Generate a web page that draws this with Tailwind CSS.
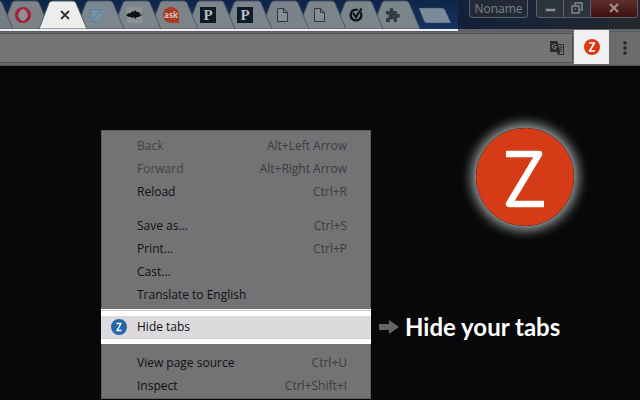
<!DOCTYPE html>
<html lang="en">
<head>
    <meta charset="UTF-8">
    <meta name="viewport" content="width=device-width, initial-scale=1.0">
    <title>Hide your tabs</title>
    <script src="https://cdn.jsdelivr.net/npm/@tailwindcss/browser@4"></script>
</head>
<body class="bg-[#08080a] min-h-screen font-['Open_Sans',sans-serif]">
    <!-- Shared tab outline -->
    <svg class="hidden">
        <symbol id="tab" viewBox="0 0 48 29">
            <path d="M0 29 L10 3 Q11 1 13 1 H34 Q36 1 37 3 L48 29 Z" stroke="#4b5864" stroke-width="1"/>
        </symbol>
    </svg>

    <!-- Window frame with tabs -->
    <header>
        <div class="flex bg-[#1b2531]">
            <nav class="flex flex-1 min-w-0 overflow-hidden border-b-2 border-[#f3f0f4] bg-linear-to-b from-[#0e2548] to-[#17335f]" aria-label="Tabs">
                <button class="relative z-12 w-12 h-[29px] -ml-[35px] -mr-[11px] shrink-0" aria-label="Tab">
                    <svg class="w-12 h-[29px] fill-[#747d84]"><use href="#tab"/></svg>
                </button>
                <button class="relative z-11 w-12 h-[29px] -mr-[11px] shrink-0" aria-label="Opera">
                    <svg class="w-12 h-[29px] fill-[#7c8286]"><use href="#tab"/></svg>
                    <svg class="absolute left-3 top-[6px] w-[18px] h-[18px]" viewBox="0 0 18 18">
                        <ellipse cx="9" cy="9" rx="6.500" ry="6.500" fill="none" stroke="#a91c39" stroke-width="3"/>
                        <ellipse cx="9" cy="9" rx="4" ry="6" fill="#8c8f93"/>
                    </svg>
                </button>
                <button class="relative z-20 w-12 h-[29px] -mr-[11px] shrink-0" aria-label="Close tab">
                    <svg class="w-12 h-[29px] fill-[#ededeb]"><use href="#tab"/></svg>
                    <svg class="absolute left-[21px] top-[10px] w-[10px] h-[10px]" viewBox="0 0 10 10">
                        <path d="M1 1 L9 9 M9 1 L1 9" stroke="#333" stroke-width="1.800"/>
                    </svg>
                </button>
                <button class="relative z-10 w-12 h-[29px] -mr-[11px] shrink-0" aria-label="Notes">
                    <svg class="w-12 h-[29px] fill-[#7c868e]"><use href="#tab"/></svg>
                    <svg class="absolute left-3 top-[7px] w-4 h-4" viewBox="0 0 16 16">
                        <path d="M2 1 H15 L12 14 H2 Z" fill="#7890a4"/>
                        <path d="M2.500 13 V2.500 H14 L2.500 14.500 H9 L12 12" fill="none" stroke="#55809f" stroke-width="1"/>
                    </svg>
                </button>
                <button class="relative z-9 w-12 h-[29px] -mr-[11px] shrink-0" aria-label="Audio">
                    <svg class="w-12 h-[29px] fill-[#7c858b]"><use href="#tab"/></svg>
                    <svg class="absolute left-3 top-[6px] w-[18px] h-[18px]" viewBox="0 0 18 18">
                        <rect x="2" y="1" width="15" height="16" fill="#8d9294"/>
                        <path d="M1 9 L4 7 L6 7 L7 5 L9 6 L10 4 L12 6 L14 6 L15 8 L17 9 L15 10 L14 11 L12 11 L10 13 L9 11 L7 12 L6 11 L4 11 Z" fill="#101214"/>
                    </svg>
                </button>
                <button class="relative z-8 w-12 h-[29px] -mr-[11px] shrink-0" aria-label="Ask">
                    <svg class="w-12 h-[29px] fill-[#7c848a]"><use href="#tab"/></svg>
                    <span class="absolute left-[13px] top-[7px] w-4 h-4 rounded-full rounded-br-none bg-[#a83c22] text-[#d8c8c2] text-[8px] leading-[15px] font-bold text-center">ask</span>
                </button>
                <button class="relative z-7 w-12 h-[29px] -mr-[11px] shrink-0" aria-label="P">
                    <svg class="w-12 h-[29px] fill-[#7b848b]"><use href="#tab"/></svg>
                    <span class="absolute left-[13px] top-[7px] w-4 h-4 bg-[#0d1b28] text-[#b4bcc2] text-[15px] leading-4 font-bold text-center font-['Liberation_Serif',serif]">P</span>
                </button>
                <button class="relative z-6 w-12 h-[29px] -mr-[11px] shrink-0" aria-label="P">
                    <svg class="w-12 h-[29px] fill-[#7b848b]"><use href="#tab"/></svg>
                    <span class="absolute left-[13px] top-[7px] w-4 h-4 bg-[#0d1b28] text-[#b4bcc2] text-[15px] leading-4 font-bold text-center font-['Liberation_Serif',serif]">P</span>
                </button>
                <button class="relative z-5 w-12 h-[29px] -mr-[11px] shrink-0" aria-label="Page">
                    <svg class="w-12 h-[29px] fill-[#7b838a]"><use href="#tab"/></svg>
                    <svg class="absolute left-4 top-2 w-[11px] h-[14px]" viewBox="0 0 11 14">
                        <path d="M0.500 0.500 H6.500 L10.500 4.500 V13.500 H0.500 Z M6.500 0.500 V4.500 H10.500" fill="#858c92" stroke="#30363c"/>
                    </svg>
                </button>
                <button class="relative z-4 w-12 h-[29px] -mr-[11px] shrink-0" aria-label="Page">
                    <svg class="w-12 h-[29px] fill-[#7b858a]"><use href="#tab"/></svg>
                    <svg class="absolute left-4 top-2 w-[11px] h-[14px]" viewBox="0 0 11 14">
                        <path d="M0.500 0.500 H6.500 L10.500 4.500 V13.500 H0.500 Z M6.500 0.500 V4.500 H10.500" fill="#858c92" stroke="#30363c"/>
                    </svg>
                </button>
                <button class="relative z-3 w-12 h-[29px] -mr-[11px] shrink-0" aria-label="Check">
                    <svg class="w-12 h-[29px] fill-[#7b868b]"><use href="#tab"/></svg>
                    <svg class="absolute left-[14px] top-[7px] w-[15px] h-[15px]" viewBox="0 0 15 15">
                        <circle cx="7" cy="8" r="5.400" fill="none" stroke="#101417" stroke-width="2.400"/>
                        <path d="M5 6 L7 9 L12 1.500" fill="none" stroke="#7b868b" stroke-width="3.600"/>
                        <path d="M4 6 L7 10 L12.500 1.500" fill="none" stroke="#101417" stroke-width="2.200"/>
                    </svg>
                </button>
                <button class="relative z-2 w-12 h-[29px] shrink-0" aria-label="Extensions">
                    <svg class="w-12 h-[29px] fill-[#7b868b]"><use href="#tab"/></svg>
                    <svg class="absolute left-[13px] top-2 w-[15px] h-[15px] fill-[#333c42]" viewBox="0 0 15 15">
                        <path d="M1 3 H5 Q3.500 0 6.500 0 Q9.500 0 8 3 H12 V6 Q15 5 15 8 Q15 10.500 12 9.500 V14 H8.500 Q9.500 11 7 11 Q4.500 11 5 14 H1 V10 Q4 10.500 4 8 Q4 6 1 6.500 Z"/>
                    </svg>
                </button>
                <button class="h-[29px] shrink-0 -ml-[2px]" aria-label="New tab">
                    <svg class="w-[34px] h-[29px]" viewBox="0 0 34 29">
                        <path d="M1 8 H24 Q26 8 27 10 L33 23 H9 Q7 23 6 21 Z" fill="#7d8a9a" stroke="#3a5170" stroke-width="0.500"/>
                    </svg>
                </button>
            </nav>
            <div class="flex gap-2 pl-[11px] pr-[2px] border-b-2 border-[#626468] bg-linear-to-r from-[#10213a] to-[#25282d] text-[#7c828a]">
                <button class="w-[59px] h-[18px] border border-t-0 border-[#5b616a] rounded-b-[4px] bg-[#242a35] text-[12px] leading-4">Noname</button>
                <div class="flex h-[18px] border border-t-0 border-[#5b616a] rounded-b-[4px] overflow-hidden bg-[#2c333c]">
                    <button class="w-[27px] border-r border-[#5b616a] flex justify-center pt-2" aria-label="Minimize">
                        <span class="w-[11px] h-1 bg-[#8b9097] border border-[#454b53]"></span>
                    </button>
                    <button class="w-[27px] border-r border-[#5b616a] flex justify-center pt-[2px]" aria-label="Restore">
                        <svg class="w-3 h-3" viewBox="0 0 12 12" fill="none" stroke="#81878e" stroke-width="1.500">
                            <path d="M4 3 V1 H11 V8 H9 M1 4 H8 V11 H1 Z M4 7 H5"/>
                        </svg>
                    </button>
                    <button class="w-[46px] bg-linear-to-b from-[#5e302d] to-[#3c100e] flex justify-center pt-[3px]" aria-label="Close">
                        <svg class="w-[10px] h-[10px]" viewBox="0 0 10 10">
                            <path d="M1 1 L9 9 M9 1 L1 9" stroke="#a08d8b" stroke-width="2.200"/>
                        </svg>
                    </button>
                </div>
            </div>
        </div>

        <!-- Toolbar -->
        <div class="flex items-start h-[35px] border-t border-b border-t-[#5c5d68] border-b-[#4d4d4f] bg-[#6b6b6c]">
            <div class="flex-1 flex items-center justify-end h-[30px] mt-px mr-px pr-2 bg-[#747474] border border-l-0 border-[#505052] rounded-r-[2px]">
                <button aria-label="Translate this page">
                    <svg class="w-[14px] h-[14px]" viewBox="0 0 14 14">
                        <path d="M0 0 H7 L8.500 3 H14 V14 H8 L7 11 H0 Z" fill="#2b2b2d"/>
                        <path d="M8 4 H13 V13 H9 L10.500 11 Z" fill="#747474"/>
                        <path d="M6 4 A2.200 2.200 0 1 0 6 7 V5.500 H4.200" fill="none" stroke="#868688"/>
                        <path d="M8.500 6 H12.500 M10.500 5 V6 M12 6 Q11 9 9 10 M9.500 7.500 L12 10.500" fill="none" stroke="#303032"/>
                    </svg>
                </button>
            </div>
            <button class="w-[35px] h-[34px] -mt-[2px] bg-[#f2f1f2] flex items-center justify-center" aria-label="Hide tabs">
                <svg class="w-4 h-4" viewBox="0 0 16 16">
                    <circle cx="8" cy="8" r="8" fill="#da3814"/>
                    <path d="M5 4 H10.500 L5.500 12 H11" fill="none" stroke="#fff" stroke-width="1.500" stroke-linejoin="round"/>
                </svg>
            </button>
            <button class="w-[31px] h-8 flex items-center justify-center" aria-label="Menu">
                <svg class="w-1 h-[14px] fill-[#252527]" viewBox="0 0 4 14">
                    <circle cx="2" cy="2" r="1.700"/><circle cx="2" cy="7" r="1.700"/><circle cx="2" cy="12" r="1.700"/>
                </svg>
            </button>
        </div>
    </header>

    <main class="flex pt-16 pl-[101px]">
        <!-- Context menu -->
        <div class="w-[270px] shrink-0 pt-1 border border-[#5c5b5e] bg-[#747275] text-[12px] leading-[22px] text-[#111113]" role="menu">
            <button class="flex justify-between w-full h-[23px] pl-[35px] pr-[23px] text-[#444347]" role="menuitem"><span>Back</span><span class="text-[#3c3b3e]">Alt+Left Arrow</span></button>
            <button class="flex justify-between w-full h-[23px] pl-[35px] pr-[23px] text-[#444347]" role="menuitem"><span>Forward</span><span class="text-[#3c3b3e]">Alt+Right Arrow</span></button>
            <button class="flex justify-between w-full h-[23px] pl-[35px] pr-[23px]" role="menuitem"><span>Reload</span><span class="text-[#3c3b3e]">Ctrl+R</span></button>
            <button class="flex justify-between w-full h-[23px] mt-[11px] pl-[35px] pr-[23px]" role="menuitem"><span>Save as...</span><span class="text-[#3c3b3e]">Ctrl+S</span></button>
            <button class="flex justify-between w-full h-[23px] pl-[35px] pr-[23px]" role="menuitem"><span>Print...</span><span class="text-[#3c3b3e]">Ctrl+P</span></button>
            <button class="flex w-full h-[23px] pl-[35px]" role="menuitem">Cast...</button>
            <button class="flex w-full h-[23px] pl-[35px]" role="menuitem">Translate to English</button>
            <div class="mt-[2px] -mx-px pt-px pb-[5px] bg-white">
                <div class="h-[6px] border-t border-[#c9c8ca]"></div>
                <button class="flex items-center w-full h-[23px] pl-[10px] gap-[10px] bg-[#dcdadd] border-b border-[#cfcdd0]" role="menuitem">
                    <svg class="w-4 h-4" viewBox="0 0 16 16">
                        <circle cx="8" cy="8" r="8" fill="#2467a9"/>
                        <path d="M5.500 4.500 H10 L6 11.500 H10.500" fill="none" stroke="#fff" stroke-width="1.500" stroke-linejoin="round"/>
                    </svg>
                    <span>Hide tabs</span>
                </button>
            </div>
            <button class="flex justify-between w-full h-[23px] mt-2 pl-[35px] pr-[23px]" role="menuitem"><span>View page source</span><span class="text-[#3c3b3e]">Ctrl+U</span></button>
            <button class="flex justify-between w-full h-[23px] pl-[35px] pr-[23px]" role="menuitem"><span>Inspect</span><span class="text-[#3c3b3e]">Ctrl+Shift+I</span></button>
        </div>

        <!-- Logo and caption -->
        <div class="flex flex-col pl-2">
            <svg class="w-[98px] h-[98px] ml-[97px] -mt-[2px] rounded-full shadow-[0_0_12px_4px_#a0a8a8]" viewBox="0 0 98 98">
                <circle cx="49" cy="49" r="49" fill="#d53b16"/>
                <path d="M30 26 H63 L33 76 H68" fill="none" stroke="#fff" stroke-width="6.500" stroke-linejoin="round"/>
            </svg>
            <div class="flex items-center gap-[6px] mt-[85px]">
                <svg class="w-5 h-[14px] fill-[#656467]" viewBox="0 0 20 14">
                    <path d="M0 4 H10 V0 L20 7 L10 14 V10 H0 Z"/>
                </svg>
                <h1 class="text-[24px] leading-8 font-bold text-white whitespace-nowrap font-['Lato',sans-serif]">Hide your tabs</h1>
            </div>
        </div>
    </main>
</body>
</html>
